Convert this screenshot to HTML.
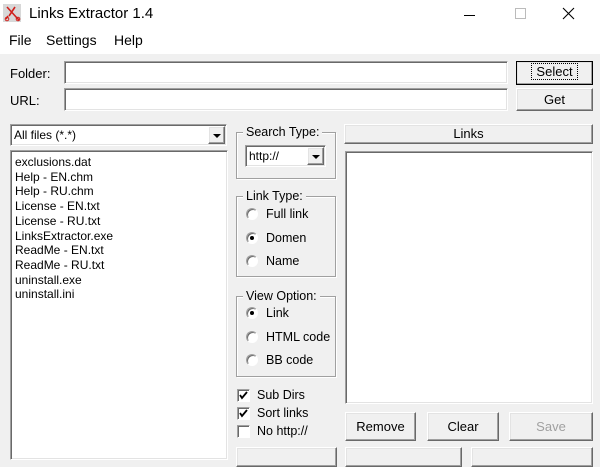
<!DOCTYPE html>
<html><head><meta charset="utf-8"><style>
*{box-sizing:border-box;margin:0;padding:0}
body{width:600px;height:454px;overflow:hidden;background:#f0f0f0;font-family:"Liberation Sans",sans-serif;font-size:12px;color:#000;position:relative}
.a{position:absolute}
.sunk{background:#fff;border:1px solid;border-color:#a0a0a0 #fff #fff #a0a0a0;box-shadow:inset 1px 1px 0 #696969,inset -1px -1px 0 #e3e3e3}
.btn{background:#f0f0f0;border:1px solid;border-color:#fff #696969 #696969 #fff;box-shadow:inset -1px -1px 0 #a0a0a0,inset 1px 1px 0 #e3e3e3;text-align:center;font-size:13px}
.grp{border:1px solid #a0a0a0;box-shadow:1px 1px 0 #fff,inset 1px 1px 0 #fff}
.gl{position:absolute;top:-8px;left:8px;background:#f0f0f0;padding:0 3px;font-size:12.5px}
.rad{position:absolute;width:12px;height:12px;border-radius:50%;background:#fff;border:1px solid #a0a0a0;border-right-color:#fff;border-bottom-color:#fff;box-shadow:inset 1px 1px 0 #696969}
.rad.on::after{content:"";position:absolute;left:3px;top:3px;width:4px;height:4px;border-radius:50%;background:#000}
.rl{position:absolute;font-size:12.5px}
.chk{position:absolute;width:13px;height:13px;background:#fff;border:1px solid;border-color:#a0a0a0 #fff #fff #a0a0a0;box-shadow:inset 1px 1px 0 #696969}
.arr{position:absolute;width:17px;height:18px;top:1px;right:1px}
.arr::after{content:"";position:absolute;left:4px;top:7px;border-left:4px solid transparent;border-right:4px solid transparent;border-top:4px solid #000}
</style></head><body>
<div class="a" style="left:0;top:0;width:600px;height:54px;background:#fff"></div>
<svg class="a" style="left:3px;top:4px" width="18" height="18"><rect width="18" height="18" fill="#d8d8d8"/><path d="M4 3 L14 14 M12 3 L6 12 M5 12 l-2 3 M14 14 l2 2" stroke="#d0201c" stroke-width="1.6" fill="none"/><circle cx="4" cy="15" r="1.8" fill="none" stroke="#d0201c"/><circle cx="15" cy="15" r="1.8" fill="none" stroke="#d0201c"/></svg>
<div class="a" style="left:29px;top:5px;font-size:15px">Links Extractor 1.4</div>
<div class="a" style="left:464px;top:15px;width:11px;height:1px;background:#000"></div>
<div class="a" style="left:515px;top:8px;width:11px;height:11px;border:1px solid #bbb"></div>
<svg class="a" style="left:562px;top:7px" width="13" height="13"><path d="M1 1L12 12M12 1L1 12" stroke="#000" stroke-width="1.1"/></svg>
<div class="a" style="left:9px;top:32px;font-size:14px">File</div>
<div class="a" style="left:46px;top:32px;font-size:14px">Settings</div>
<div class="a" style="left:114px;top:32px;font-size:14px">Help</div>
<div class="a" style="left:10px;top:66px;font-size:13px">Folder:</div>
<div class="a" style="left:10px;top:93px;font-size:13px">URL:</div>
<div class="a sunk" style="left:64px;top:61px;width:444px;height:23px"></div>
<div class="a sunk" style="left:64px;top:88px;width:444px;height:23px"></div>
<div class="a btn" style="left:516px;top:61px;width:77px;height:24px;border:1px solid #000;line-height:20px"><span style="outline:1px dotted #000;padding:0 4px">Select</span></div>
<div class="a btn" style="left:516px;top:88px;width:77px;height:23px;line-height:21px">Get</div>
<div class="a sunk" style="left:10px;top:124px;width:217px;height:22px"><span style="position:absolute;left:3px;top:3px">All files (*.*)</span><div class="arr btn"></div></div>
<div class="a sunk" style="left:10px;top:150px;width:218px;height:310px;padding:4px 0 0 4px;line-height:14.7px">exclusions.dat<br>Help - EN.chm<br>Help - RU.chm<br>License - EN.txt<br>License - RU.txt<br>LinksExtractor.exe<br>ReadMe - EN.txt<br>ReadMe - RU.txt<br>uninstall.exe<br>uninstall.ini</div>
<div class="a grp" style="left:236px;top:132px;width:100px;height:47px"><span class="gl" style="left:6px">Search Type:</span></div>
<div class="a sunk" style="left:245px;top:145px;width:81px;height:22px"><span style="position:absolute;left:3px;top:3px">http://</span><div class="arr btn"></div></div>
<div class="a grp" style="left:236px;top:196px;width:100px;height:81px"><span class="gl" style="left:6px">Link Type:</span></div>
<div class="rad" style="left:246px;top:208px"></div><div class="rl" style="left:266px;top:207px">Full link</div>
<div class="rad on" style="left:246px;top:232px"></div><div class="rl" style="left:266px;top:231px">Domen</div>
<div class="rad" style="left:246px;top:255px"></div><div class="rl" style="left:266px;top:254px">Name</div>
<div class="a grp" style="left:236px;top:296px;width:100px;height:81px"><span class="gl" style="left:6px">View Option:</span></div>
<div class="rad on" style="left:246px;top:307px"></div><div class="rl" style="left:266px;top:306px">Link</div>
<div class="rad" style="left:246px;top:331px"></div><div class="rl" style="left:266px;top:330px">HTML code</div>
<div class="rad" style="left:246px;top:354px"></div><div class="rl" style="left:266px;top:353px">BB code</div>
<div class="chk" style="left:237px;top:389px"><svg width="11" height="11" style="position:absolute;left:0;top:0"><path d="M2 5l2 3l5-6" stroke="#000" stroke-width="1.8" fill="none"/></svg></div><div class="rl" style="left:257px;top:388px">Sub Dirs</div>
<div class="chk" style="left:237px;top:407px"><svg width="11" height="11" style="position:absolute;left:0;top:0"><path d="M2 5l2 3l5-6" stroke="#000" stroke-width="1.8" fill="none"/></svg></div><div class="rl" style="left:257px;top:406px">Sort links</div>
<div class="chk" style="left:237px;top:425px"></div><div class="rl" style="left:257px;top:424px">No http://</div>
<div class="a btn" style="left:344px;top:124px;width:249px;height:20px;line-height:18px">Links</div>
<div class="a sunk" style="left:345px;top:151px;width:248px;height:253px"></div>
<div class="a btn" style="left:345px;top:412px;width:71px;height:29px;line-height:27px">Remove</div>
<div class="a btn" style="left:427px;top:412px;width:72px;height:29px;line-height:27px">Clear</div>
<div class="a btn" style="left:509px;top:412px;width:84px;height:29px;line-height:27px;color:#a0a0a0">Save</div>
<div class="a btn" style="left:236px;top:447px;width:101px;height:20px"></div>
<div class="a btn" style="left:345px;top:447px;width:117px;height:20px"></div>
<div class="a btn" style="left:471px;top:447px;width:122px;height:20px"></div>
</body></html>
